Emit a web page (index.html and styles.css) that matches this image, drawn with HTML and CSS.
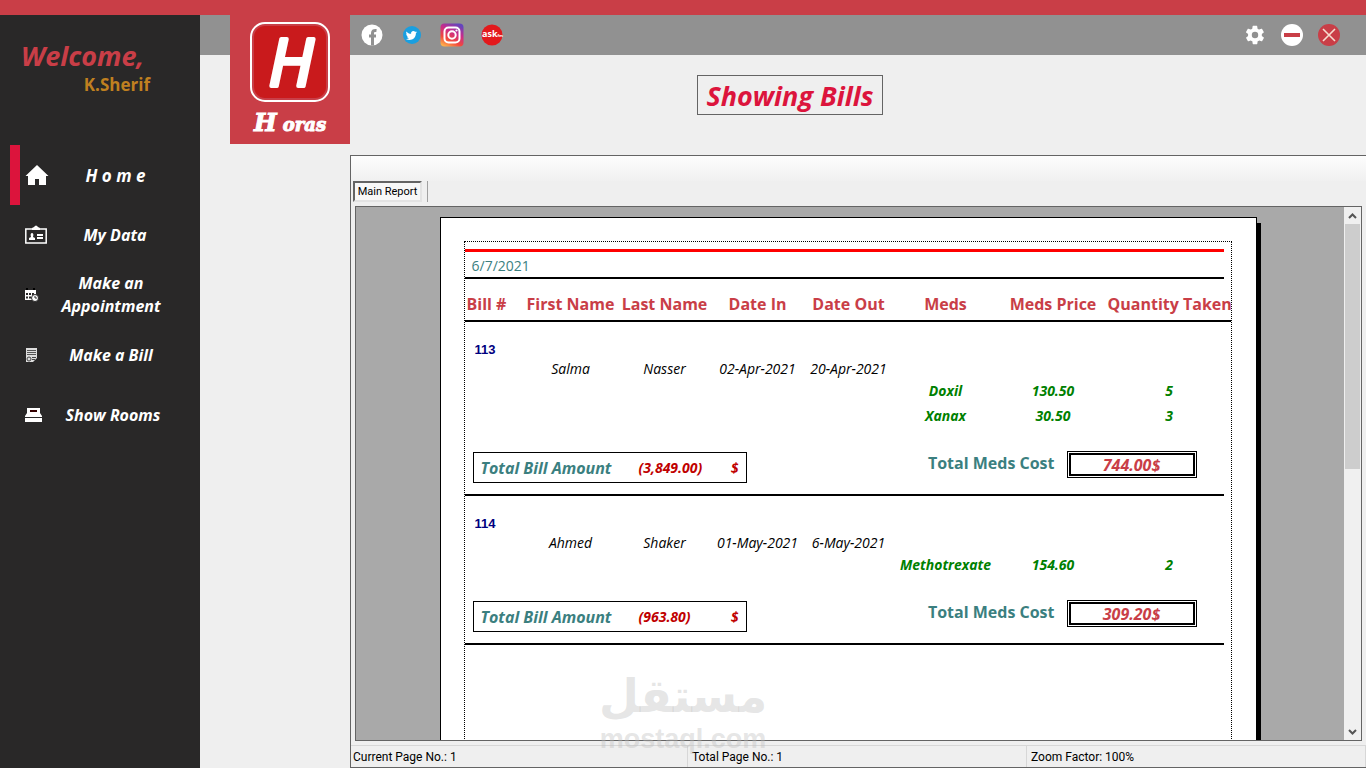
FILE: index.html
```html
<!DOCTYPE html>
<html lang="en">
<head>
  <meta charset="UTF-8" />
  <meta name="viewport" content="width=device-width, initial-scale=1.0"/>
  <title>Showing Bills</title>
  <link rel="stylesheet" href="styles.css">
</head>
<body>
  <div class="top-strip"></div>
  <div class="app">
    <aside class="sidebar">
      <div class="welcome">
        <p class="hello">Welcome,</p>
        <p class="user">K.Sherif</p>
      </div>
      <nav class="menu">
        <button type="button" class="menu-item active">
          <svg width="24" height="24" viewBox="0 0 24 24"><path fill="#fff" d="M12 2 0.500 13H3v9h7v-6h4v6h7v-9h2.500z"/></svg>
          <span>H o m e</span>
        </button>
        <button type="button" class="menu-item">
          <svg width="24" height="24" viewBox="0 0 24 24"><path fill="none" stroke="#fff" stroke-width="1.500" d="M1.800 6h20.400v14H1.800z"/><path fill="#fff" d="M8 7V5l2-1q2-3 4 0l2 1v2zM5 17v-2l2-1c-1-3 0-4 1-4s2 1 1 4l2 1v2zM13 11h6v2h-6zM13 14h6v2h-6z"/></svg>
          <span>My Data</span>
        </button>
        <button type="button" class="menu-item">
          <svg width="16" height="16" viewBox="0 0 16 16"><path fill="#fff" d="M1 3h11v10H1z"/><path stroke="#292828" stroke-width="2" stroke-dasharray="2 1" d="M2 7h9M2 10.500h9"/><path stroke="#000" stroke-width="2" d="M3 1v2M10 1v2"/><circle cx="11" cy="11" r="3.500" fill="#fff" stroke="#292828"/><path fill="none" stroke="#292828" d="M11 9v2h2"/></svg>
          <span>Make an Appointment</span>
        </button>
        <button type="button" class="menu-item">
          <svg width="16" height="16" viewBox="0 0 16 16"><path fill="#ddd" d="M2 1h11v10l-4 4H2z"/><path stroke="#555" d="M3 3.500h9M3 5.500h9M3 7.500h9"/><circle cx="5" cy="12" r="2" fill="none" stroke="#444"/><path stroke="#444" d="M8 10.500h4M8 12.500h3"/></svg>
          <span>Make a Bill</span>
        </button>
        <button type="button" class="menu-item">
          <svg width="20" height="20" viewBox="0 0 20 20"><path fill="#fff" d="M3 3h13v5l2 3v1H1v-1l2-3zM1 13h17v4H1z"/><path fill="#300" d="M6 5h7v2H6z"/></svg>
          <span>Show Rooms</span>
        </button>
      </nav>
    </aside>

    <main class="main">
      <header class="header">
        <div class="social">
          <a href="#" aria-label="Facebook"><svg width="24" height="24" viewBox="0 0 24 24"><circle cx="12" cy="12" r="10.500" fill="#fff"/><path fill="none" stroke="#919191" stroke-width="3" d="M12.500 22.500V10q0-3 4-2.500M9 13h7"/></svg></a>
          <a href="#" aria-label="Twitter"><svg width="24" height="24" viewBox="0 0 24 24"><circle cx="12" cy="12" r="9" fill="#1a9fe0"/><path fill="#fff" d="M17 9c-.5.3-1 .4-1.400.4.500-.3.800-.7 1-1.200-.500.300-1 .500-1.500.600a2.300 2.300 0 0 0-4 2c-2-.1-3.500-1-4.600-2.400-.6 1-.3 2.300.7 3-.4 0-.7-.1-1-.3 0 1.100.8 2 1.800 2.300-.3.100-.7.100-1 0 .3 1 1.200 1.600 2.200 1.600-1 .8-2.200 1-3.300.9 4.500 2.600 10 0 10-5.700.4-.3.800-.7 1.100-1.200z"/></svg></a>
          <a href="#" aria-label="Instagram"><svg width="24" height="24" viewBox="0 0 24 24"><defs><linearGradient id="insta" x1="0.200" y1="1" x2="0.700" y2="0"><stop offset="0" stop-color="#fdb04b"/><stop offset="0.300" stop-color="#f2493c"/><stop offset="0.650" stop-color="#c92b8b"/><stop offset="1" stop-color="#6445bd"/></linearGradient></defs><rect x="0.500" y="0.500" width="23" height="23" rx="4" fill="url(#insta)"/><rect x="4.500" y="4.500" width="15" height="15" rx="4" fill="none" stroke="#fff" stroke-width="2"/><circle cx="12" cy="12" r="3.700" fill="none" stroke="#fff" stroke-width="2"/><circle cx="16.500" cy="7.500" r="1.100" fill="#fff"/></svg></a>
          <a href="#" aria-label="ASKfm"><svg width="24" height="24" viewBox="0 0 24 24"><circle cx="12" cy="12" r="10.500" fill="#e3191c"/><text x="2" y="14" class="ask-letters">ask<tspan class="ask-small">fm</tspan></text></svg></a>
        </div>
        <div class="window-buttons">
          <button type="button" aria-label="Settings"><svg width="22" height="22" viewBox="0 0 24 24"><path fill="#fff" d="M19.400 13c0-.3.100-.6.100-1s0-.7-.1-1l2.100-1.600c.2-.2.200-.4.100-.6l-2-3.500c-.1-.2-.4-.3-.6-.2l-2.500 1c-.5-.4-1.100-.7-1.700-1l-.4-2.600c0-.3-.2-.5-.5-.5h-4c-.3 0-.5.200-.5.500L9 5.100c-.6.300-1.200.6-1.700 1l-2.500-1c-.2-.1-.5 0-.6.200l-2 3.500c-.1.200-.1.500.1.600L4.500 11c0 .3-.1.600-.1 1s0 .7.100 1l-2.100 1.600c-.2.200-.2.400-.1.600l2 3.500c.1.200.4.300.6.200l2.500-1c.5.400 1.100.7 1.700 1l.4 2.600c0 .3.200.5.500.5h4c.3 0 .5-.2.500-.5l.4-2.600c.6-.3 1.200-.6 1.700-1l2.500 1c.2.100.5 0 .6-.2l2-3.500c.1-.2.100-.5-.1-.6zM12 15.500a3.500 3.500 0 1 1 0-7 3.500 3.500 0 0 1 0 7z"/></svg></button>
          <button type="button" aria-label="Minimize"><svg width="22" height="22" viewBox="0 0 22 22"><circle cx="11" cy="11" r="11" fill="#fff"/><rect x="3" y="9" width="16" height="4" fill="#c93e47"/></svg></button>
          <button type="button" aria-label="Close"><svg width="22" height="22" viewBox="0 0 22 22"><circle cx="11" cy="11" r="11" fill="#c93e47"/><path stroke="#f6ddd0" stroke-width="1.600" d="m5 5 12 12M17 5 5 17"/></svg></button>
        </div>
        <div class="brand">
          <svg width="80" height="80" viewBox="0 0 80 80"><rect x="1" y="1" width="78" height="78" rx="14" fill="#c93e47" stroke="#fff" stroke-width="2"/><rect x="4" y="4" width="72" height="72" rx="11" fill="#c91a1c"/><text x="41" y="64" class="brand-letter">H</text></svg>
          <p class="brand-name"><span>H</span> oras</p>
        </div>
      </header>

      <div class="title-row">
        <h1 class="title">Showing Bills</h1>
      </div>

      <section class="viewer">
        <div class="toolbar"></div>
        <div class="tabs"><button type="button" class="tab">Main Report</button></div>
        <div class="report">
          <div class="canvas">
            <div class="paper">
              <div class="sheet">
                <div class="date">6/7/2021</div>
                <table class="bills">
                  <colgroup>
                    <col class="c-bill"><col class="c-first"><col class="c-last"><col class="c-in">
                    <col class="c-out"><col class="c-meds"><col class="c-price"><col class="c-qty">
                  </colgroup>
                  <thead>
                    <tr><th class="left">Bill #</th><th>First Name</th><th>Last Name</th><th>Date In</th><th>Date Out</th><th>Meds</th><th>Meds Price</th><th>Quantity Taken</th></tr>
                  </thead>
                  <tbody>
                    <tr class="bill-no"><td>113</td><td colspan="7"></td></tr>
                    <tr class="patient"><td></td><td>Salma</td><td>Nasser</td><td>02-Apr-2021</td><td>20-Apr-2021</td><td colspan="3"></td></tr>
                    <tr class="med"><td colspan="5"></td><td>Doxil</td><td>130.50</td><td>5</td></tr>
                    <tr class="med"><td colspan="5"></td><td>Xanax</td><td>30.50</td><td>3</td></tr>
                    <tr class="totals"><td colspan="8">
                      <div class="totals-row">
                        <div class="bill-total"><span class="label">Total Bill Amount</span><span class="amount">(3,849.00)</span><span class="currency">$</span></div>
                        <div class="meds-total"><span>Total Meds Cost</span><span class="cost">744.00$</span></div>
                      </div>
                    </td></tr>
                  </tbody>
                  <tbody>
                    <tr class="bill-no"><td>114</td><td colspan="7"></td></tr>
                    <tr class="patient"><td></td><td>Ahmed</td><td>Shaker</td><td>01-May-2021</td><td>6-May-2021</td><td colspan="3"></td></tr>
                    <tr class="med"><td colspan="5"></td><td>Methotrexate</td><td>154.60</td><td>2</td></tr>
                    <tr class="totals"><td colspan="8">
                      <div class="totals-row">
                        <div class="bill-total"><span class="label">Total Bill Amount</span><span class="amount">(963.80)</span><span class="currency">$</span></div>
                        <div class="meds-total"><span>Total Meds Cost</span><span class="cost">309.20$</span></div>
                      </div>
                    </td></tr>
                  </tbody>
                </table>
              </div>
            </div>
          </div>
          <div class="scrollbar">
            <button type="button" aria-label="Scroll up"><svg width="9" height="6" viewBox="0 0 9 6"><path fill="none" stroke="#555" stroke-width="2" d="m1 5 3.500-3.500L8 5"/></svg></button>
            <div class="track"><div class="thumb"></div></div>
            <button type="button" aria-label="Scroll down"><svg width="9" height="6" viewBox="0 0 9 6"><path fill="none" stroke="#555" stroke-width="2" d="m1 1 3.500 3.500L8 1"/></svg></button>
          </div>
        </div>
        <footer class="status">
          <span>Current Page No.: 1</span>
          <span>Total Page No.: 1</span>
          <span>Zoom Factor: 100%</span>
        </footer>
      </section>

      <div class="watermark">
        <span class="wm-ar" lang="ar">مستقل</span>
        <span class="wm-en">mostaql.com</span>
      </div>
    </main>
  </div>
</body>
</html>
```
FILE: styles.css
```css
* {
  box-sizing: border-box;
}
body {
  margin: 0;
  height: 100vh;
  display: flex;
  flex-direction: column;
  overflow: hidden;
  background: #efefef;
  font-family: "Comic Sans MS", "Open Sans", sans-serif;
}
p, h1 {
  margin: 0;
}
button {
  font-family: inherit;
  border: 0;
  padding: 0;
  background: none;
  cursor: pointer;
}
svg {
  display: block;
  flex: none;
}
.top-strip {
  flex: none;
  height: 15px;
  background: #c93e47;
}
.app {
  flex: 1;
  min-height: 0;
  display: flex;
}

/* sidebar */
.sidebar {
  flex: none;
  width: 200px;
  background: #292828;
}
.welcome {
  height: 130px;
  padding: 24px 50px 0 21px;
  font-weight: bold;
}
.hello {
  color: #c93e47;
  font-size: 27px;
  line-height: 34px;
  font-style: italic;
}
.user {
  color: #c08020;
  font-size: 17px;
  line-height: 24px;
  text-align: right;
}
.menu-item {
  display: flex;
  align-items: center;
  width: 190px;
  height: 60px;
  margin-left: 10px;
  padding-left: 14px;
  color: #fff;
  font-size: 16px;
  line-height: 23px;
  font-weight: bold;
  font-style: italic;
}
.menu-item.active {
  border-left: 10px solid #dc143c;
  padding-left: 5px;
}
.menu-item.active span {
  font-size: 17px;
}
.menu-item span {
  flex: 1;
  padding: 0 38px 0 20px;
  text-align: center;
}

/* header */
.main {
  position: relative;
  flex: 1;
  min-width: 0;
  display: flex;
  flex-direction: column;
}
.header {
  position: relative;
  flex: none;
  height: 40px;
  padding: 0 26px 0 160px;
  display: flex;
  align-items: center;
  justify-content: space-between;
  background: #919191;
}
.social {
  display: flex;
  gap: 16px;
}
.window-buttons {
  display: flex;
  gap: 15px;
}
.brand {
  position: absolute;
  left: 30px;
  top: 0;
  width: 120px;
  height: 129px;
  padding-top: 7px;
  background: #c93e47;
  display: flex;
  flex-direction: column;
  align-items: center;
}
.brand-name {
  color: #fff;
  font-family: "DejaVu Serif", serif;
  font-weight: bold;
  font-style: italic;
  font-size: 18px;
  line-height: 42px;
  -webkit-text-stroke: 1px #fff;
}
.brand-name span {
  font-size: 24px;
}
.brand-letter {
  font: italic 66px "Open Sans", sans-serif;
  fill: #fff;
  stroke: #fff;
  stroke-width: 4px;
  stroke-linejoin: round;
  text-anchor: middle;
}
.ask-letters {
  font: bold 9px "Open Sans", sans-serif;
  fill: #fff;
}
.ask-small {
  font-size: 4px;
}
.title-row {
  flex: none;
  height: 100px;
  padding: 20px 0 0 14px;
  text-align: center;
}
.title {
  display: inline-block;
  height: 40px;
  padding: 0 8px;
  border: 1px solid #646464;
  color: #dc143c;
  font-size: 27px;
  line-height: 40px;
  font-style: italic;
}

/* report viewer */
.viewer {
  flex: 1;
  min-height: 0;
  margin-left: 150px;
  display: flex;
  flex-direction: column;
  border: 1px solid #646464;
  border-right: 0;
  font-family: Tahoma, Roboto, sans-serif;
}
.toolbar {
  flex: none;
  height: 25px;
  background: linear-gradient(#fdfdfd, #f0f0f0);
}
.tabs {
  flex: none;
  display: flex;
  width: 77px;
  height: 21px;
  margin-bottom: 4px;
  padding-left: 2px;
  border-right: 1px solid #a0a0a0;
}
.tab {
  width: 69px;
  height: 21px;
  border: 2px solid;
  border-color: #646464 #e3e3e3 #e3e3e3 #646464;
  background: #f8f8f8;
  color: #000;
  font-size: 11px;
}
.report {
  flex: 1;
  min-height: 0;
  margin: 0 4px;
  display: flex;
  border: 1px solid #646464;
}
.canvas {
  flex: 1;
  min-width: 0;
  padding: 10px 4px 0 0;
  overflow: hidden;
  background: #a9a9a9;
}
.paper {
  width: 817px;
  height: 1056px;
  margin: 0 auto;
  padding: 23px 24px 23px 23px;
  border: 1px solid #000;
  background: #fff;
  box-shadow: 4px 6px 0 #000;
  font-family: "Comic Sans MS", "Open Sans", sans-serif;
}
.sheet {
  height: 100%;
  padding-top: 7px;
  border: 1px dotted #000;
}
.date {
  height: 30px;
  margin-right: 7px;
  padding-left: 7px;
  border-top: 3px solid #f00;
  border-bottom: 2px solid #000;
  color: #3b7f7f;
  font-size: 14px;
  line-height: 28px;
}
.bills {
  width: 100%;
  table-layout: fixed;
  border-collapse: separate;
  border-spacing: 0;
}
.c-bill { width: 58px; }
.c-first { width: 96px; }
.c-last { width: 92px; }
.c-in { width: 94px; }
.c-out { width: 88px; }
.c-meds { width: 106px; }
.c-price { width: 109px; }
.bills th,
.bills td {
  padding: 0;
  text-align: center;
  white-space: nowrap;
}
.bills th {
  height: 43px;
  padding-top: 9px;
  border-bottom: 2px solid #000;
  color: #c93e47;
  font-size: 16px;
  line-height: 20px;
}
.bills th.left {
  padding-left: 2px;
  text-align: left;
}
.bills .bill-no td {
  height: 37px;
  padding-left: 10px;
  vertical-align: bottom;
  text-align: left;
  color: #000080;
  font: bold 13px/18px "Liberation Sans", Arial, sans-serif;
}
.patient td {
  height: 19px;
  font-size: 14px;
  line-height: 19px;
  font-style: italic;
}
.med td {
  height: 25px;
  color: #008000;
  font-size: 14px;
  line-height: 25px;
  font-weight: bold;
  font-style: italic;
}
.totals-row {
  display: flex;
  justify-content: space-between;
  height: 68px;
  margin-right: 7px;
  padding: 23px 27px 0 8px;
  border-bottom: 2px solid #000;
  font-size: 16px;
  font-weight: bold;
  color: #3b7f7f;
}
.bill-total {
  display: grid;
  grid-template-columns: 158px 1fr auto;
  width: 274px;
  height: 31px;
  margin-top: 1px;
  padding: 0 7px;
  border: 1px solid #000;
  line-height: 30px;
  text-align: left;
  font-style: italic;
}
.amount,
.currency {
  color: #c00000;
  font-size: 14px;
}
.meds-total {
  display: flex;
  gap: 12px;
  line-height: 24px;
}
.cost {
  width: 130px;
  height: 27px;
  border: 1px solid #000;
  box-shadow: inset 0 0 0 1px #fff, inset 0 0 0 3px #000;
  color: #c93e47;
  line-height: 26px;
  font-style: italic;
}

/* scrollbar */
.scrollbar {
  flex: none;
  width: 17px;
  display: flex;
  flex-direction: column;
  background: #f0f0f0;
}
.scrollbar button {
  display: flex;
  align-items: center;
  justify-content: center;
  height: 17px;
}
.track {
  flex: 1;
  padding: 0 1px;
}
.thumb {
  height: 49%;
  background: #cdcdcd;
}

/* status bar */
.status {
  flex: none;
  display: flex;
  height: 26px;
  padding-top: 4px;
  font-size: 12px;
  line-height: 22px;
}
.status span {
  flex: 1;
  padding-left: 4px;
  border-top: 1px solid #d7d7d7;
  border-right: 1px solid #d7d7d7;
}
.status span:first-child {
  padding-left: 2px;
}

/* watermark */
.watermark {
  position: absolute;
  left: 400px;
  bottom: 14px;
  width: 166px;
  display: flex;
  flex-direction: column;
  align-items: center;
  color: rgba(190, 190, 190, 0.4);
  font-weight: bold;
  pointer-events: none;
}
.wm-ar {
  font-family: "DejaVu Sans", sans-serif;
  font-size: 46px;
  line-height: 56px;
}
.wm-en {
  font-family: "Liberation Sans", Arial, sans-serif;
  font-size: 27px;
  line-height: 30px;
}
```
